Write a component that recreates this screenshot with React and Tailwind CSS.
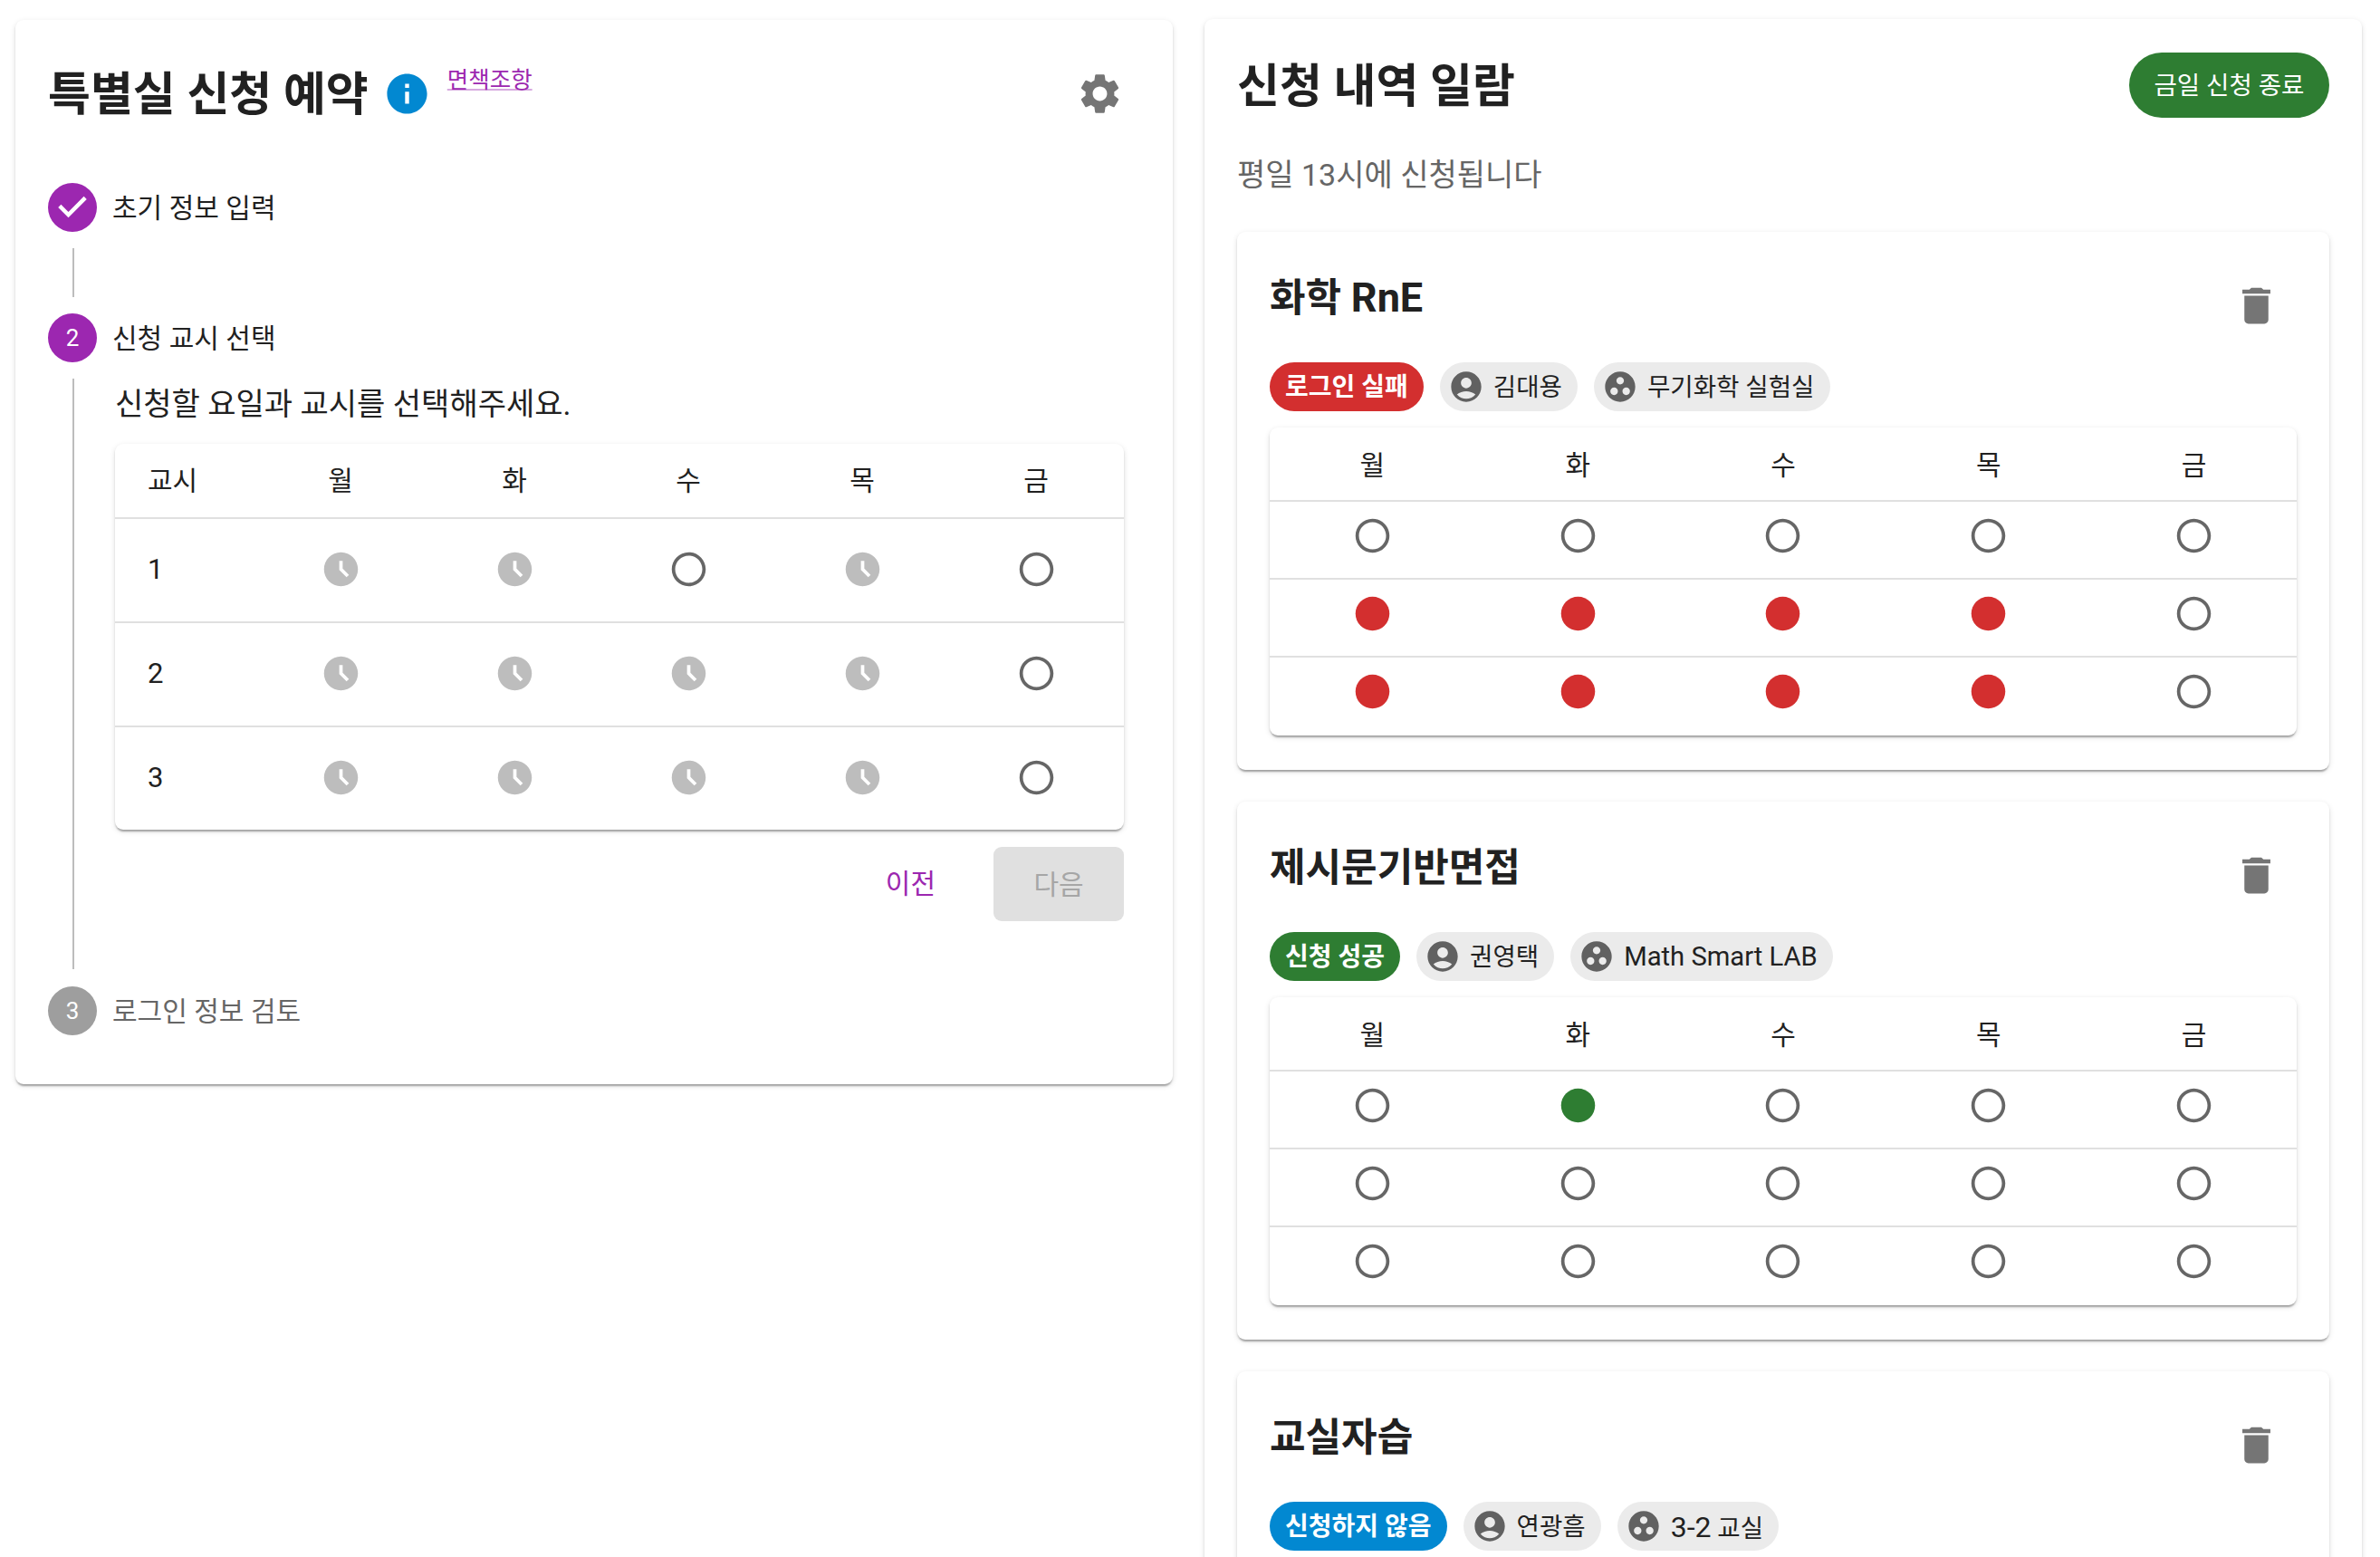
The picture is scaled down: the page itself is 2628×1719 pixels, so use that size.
import React from 'react';

const FONT = "font-['Roboto','Noto_Sans_CJK_KR',sans-serif]";
const DAYS = ['월', '화', '수', '목', '금'];

const ICONS = {
  info: 'M12 2C6.48 2 2 6.48 2 12s4.48 10 10 10 10-4.48 10-10S17.52 2 12 2zm1 15h-2v-6h2v6zm0-8h-2V7h2v2z',
  gear: 'M19.14 12.94c.04-.3.06-.61.06-.94 0-.32-.02-.64-.07-.94l2.03-1.58c.18-.14.23-.41.12-.61l-1.92-3.32c-.12-.22-.37-.29-.59-.22l-2.39.96c-.5-.38-1.03-.7-1.62-.94l-.36-2.54c-.04-.24-.24-.41-.48-.41h-3.84c-.24 0-.43.17-.47.41l-.36 2.54c-.59.24-1.13.57-1.62.94l-2.39-.96c-.22-.08-.47 0-.59.22L2.74 8.87c-.12.21-.08.47.12.61l2.03 1.58c-.05.3-.09.63-.09.94s.02.64.07.94l-2.03 1.58c-.18.14-.23.41-.12.61l1.92 3.32c.12.22.37.29.59.22l2.39-.96c.5.38 1.03.7 1.62.94l.36 2.54c.05.24.24.41.48.41h3.84c.24 0 .44-.17.47-.41l.36-2.54c.59-.24 1.13-.56 1.62-.94l2.39.96c.22.08.47 0 .59-.22l1.92-3.32c.12-.22.07-.47-.12-.61l-2.01-1.58zM12 15.6c-1.98 0-3.6-1.62-3.6-3.6s1.62-3.6 3.6-3.6 3.6 1.62 3.6 3.6-1.62 3.6-3.6 3.6z',
  trash: 'M6 19c0 1.1.9 2 2 2h8c1.1 0 2-.9 2-2V7H6v12zM19 4h-3.5l-1-1h-5l-1 1H5v2h14V4z',
  person: 'M12 2C6.48 2 2 6.48 2 12s4.48 10 10 10 10-4.48 10-10S17.52 2 12 2zm0 4c1.93 0 3.5 1.57 3.5 3.5S13.93 13 12 13s-3.5-1.57-3.5-3.5S10.07 6 12 6zm0 14c-2.03 0-4.43-.82-6.14-2.88C7.55 15.8 9.68 15 12 15s4.45.8 6.14 2.12C16.43 19.18 14.03 20 12 20z',
  room: 'M12 2C6.48 2 2 6.48 2 12s4.48 10 10 10 10-4.48 10-10S17.52 2 12 2zM8 17.5c-1.38 0-2.5-1.12-2.5-2.5s1.12-2.5 2.5-2.5 2.5 1.12 2.5 2.5-1.12 2.5-2.5 2.5zM9.5 8c0-1.38 1.12-2.5 2.5-2.5s2.5 1.12 2.5 2.5-1.12 2.5-2.5 2.5S9.5 9.38 9.5 8zm6.5 9.5c-1.38 0-2.5-1.12-2.5-2.5s1.12-2.5 2.5-2.5 2.5 1.12 2.5 2.5-1.12 2.5-2.5 2.5z',
  radio: 'M12 2C6.48 2 2 6.48 2 12s4.48 10 10 10 10-4.48 10-10S17.52 2 12 2zm0 18c-4.42 0-8-3.58-8-8s3.58-8 8-8 8 3.58 8 8-3.58 8-8 8z',
  clock: 'M11.99 2C6.47 2 2 6.48 2 12s4.47 10 9.99 10C17.52 22 22 17.52 22 12S17.52 2 11.99 2zm3.3 14.71L11 12.41V7h2v4.59l3.71 3.71-1.42 1.41z',
  dot: 'M12 2a10 10 0 1 0 0 20 10 10 0 0 0 0-20z',
  check: 'M12 0a12 12 0 1 0 0 24 12 12 0 0 0 0-24zm-2 17l-5-5 1.4-1.4 3.6 3.6 7.6-7.6L19 8l-9 9z',
};

const Icon = ({ name, className }) => (
  <svg viewBox="0 0 24 24" fill="currentColor" className={className}>
    <path d={ICONS[name]} />
  </svg>
);

const SlotIcon = ({ kind }) => {
  if (kind === 'c') return <Icon name="clock" className="w-[45px] h-[45px] text-[#bdbdbd]" />;
  if (kind === 'r') return <Icon name="dot" className="w-[45px] h-[45px] text-[#d32f2f]" />;
  if (kind === 'g') return <Icon name="dot" className="w-[45px] h-[45px] text-[#2e7d32]" />;
  return <Icon name="radio" className="w-[45px] h-[45px] text-[#666666]" />;
};

const SHADOW = 'shadow-[0_4px_2px_-2px_rgba(0,0,0,0.2),0_2px_2px_0_rgba(0,0,0,0.14),0_2px_6px_0_rgba(0,0,0,0.12)]';

const StepBadge = ({ children, gray }) => (
  <div className={`w-[54px] h-[54px] rounded-full flex items-center justify-center text-white text-[26px] leading-none ${gray ? 'bg-[#9e9e9e]' : 'bg-[#9c27b0]'}`}>
    {children}
  </div>
);

const PICK_ROWS = [
  ['1', 'c', 'c', 'o', 'c', 'o'],
  ['2', 'c', 'c', 'c', 'c', 'o'],
  ['3', 'c', 'c', 'c', 'c', 'o'],
];

const PickTable = () => (
  <div className={`rounded-[9px] bg-white ${SHADOW}`}>
    <div className="grid grid-cols-[153px_repeat(5,192px)] h-[83px] items-center border-b-2 border-[#e0e0e0] text-[30px] text-[#212121]">
      <div className="pl-[36px]">교시</div>
      {DAYS.map((d) => (
        <div key={d} className="text-center">{d}</div>
      ))}
    </div>
    {PICK_ROWS.map(([label, ...cells], i) => (
      <div
        key={label}
        className={`grid grid-cols-[153px_repeat(5,192px)] items-center text-[31px] text-[#212121] ${i < 2 ? 'h-[115px] border-b-2 border-[#e0e0e0]' : 'h-[113px]'}`}
      >
        <div className="pl-[36px]">{label}</div>
        {cells.map((k, j) => (
          <div key={j} className="flex justify-center pb-[2px]"><SlotIcon kind={k} /></div>
        ))}
      </div>
    ))}
  </div>
);

const StatusTable = ({ rows }) => (
  <div className={`rounded-[9px] bg-white ${SHADOW}`}>
    <div className="grid grid-cols-5 h-[82px] pt-[2px] items-center border-b-2 border-[#e0e0e0] text-[30px] text-[#212121]">
      {DAYS.map((d) => (
        <div key={d} className="text-center">{d}</div>
      ))}
    </div>
    {rows.map((cells, i) => (
      <div key={i} className={`grid grid-cols-5 h-[86px] items-center ${i < rows.length - 1 ? 'border-b-2 border-[#e0e0e0]' : ''}`}>
        {cells.map((k, j) => (
          <div key={j} className={`flex justify-center ${i < rows.length - 1 ? 'pb-[10px]' : 'pb-[12px]'}`}><SlotIcon kind={k} /></div>
        ))}
      </div>
    ))}
  </div>
);

const Chip = ({ icon, children }) => (
  <div className="h-[54px] rounded-full bg-[#ebebeb] flex items-center pl-[9px] pr-[17px] gap-[10px] text-[27.6px] text-[#212121]">
    <Icon name={icon} className="w-[40px] h-[40px] text-[#616161]" />
    <span className="pt-[2px]">{children}</span>
  </div>
);

const RequestCard = ({ title, status, statusClass, teacher, room, rows }) => (
  <div className={`rounded-[9px] bg-white px-[36px] pt-[35px] pb-[38px] ${SHADOW}`}>
    <div className="flex justify-between items-start h-[109px]">
      <h3 className="text-[43px] font-bold leading-[76px] text-[#212121]">{title}</h3>
      <Icon name="trash" className="w-[53px] h-[53px] mt-[20px] mr-[18px] text-[#757575]" />
    </div>
    <div className="flex gap-[18px] mb-[18px]">
      <div className={`h-[54px] pt-[2px] rounded-full px-[17px] flex items-center text-[28px] font-bold text-white ${statusClass}`}>{status}</div>
      <Chip icon="person">{teacher}</Chip>
      <Chip icon="room">{room}</Chip>
    </div>
    {rows && <StatusTable rows={rows} />}
  </div>
);

export default function App() {
  return (
    <div className={`h-[1719px] overflow-hidden bg-white flex items-start gap-[35px] pl-[17px] pt-[22px] ${FONT}`}>
      {/* left: booking stepper */}
      <section className={`w-[1278px] rounded-[9px] bg-white pl-[36px] pr-[54px] pt-[41px] pb-[54px] ${SHADOW}`}>
        <header className="flex items-center h-[80px]">
          <h1 className="text-[51px] pt-[3px] font-bold leading-none text-[#212121]">특별실 신청 예약</h1>
          <Icon name="info" className="w-[53px] h-[53px] ml-[16px] text-[#0288d1]" />
          <a href="#" className="self-start mt-[7px] ml-[18px] text-[25.5px] leading-[36px] text-[#9c27b0] underline decoration-[#9c27b0]/40 decoration-2">면책조항</a>
          <Icon name="gear" className="w-[53px] h-[53px] ml-auto text-[#757575]" />
        </header>

        <div className="mt-[59px] flex items-center gap-[17px] h-[54px] text-[30px] text-[#212121]">
          <Icon name="check" className="w-[54px] h-[54px] text-[#9c27b0]" />
          <span>초기 정보 입력</span>
        </div>
        <div className="ml-[27px] my-[18px] h-[54px] border-l-2 border-[#bdbdbd]" />
        <div className="flex items-center gap-[17px] h-[54px] text-[30px] text-[#212121]">
          <StepBadge>2</StepBadge>
          <span>신청 교시 선택</span>
        </div>
        <div className="ml-[27px] mt-[18px] h-[652px] border-l-2 border-[#bdbdbd] pl-[45px]">
          <p className="h-[57px] mb-[15px] flex items-center text-[34px] text-[#212121]">신청할 요일과 교시를 선택해주세요.</p>
          <PickTable />
          <div className="mt-[19px] flex items-center justify-end gap-[64px]">
            <button className="pb-[2px] text-[30px] text-[#9c27b0]">이전</button>
            <button className="w-[144px] h-[82px] rounded-[9px] bg-[#e0e0e0] text-[30px] text-[#a6a6a6]">다음</button>
          </div>
        </div>
        <div className="mt-[19px] flex items-center gap-[17px] h-[54px] text-[30px] text-[#666666]">
          <StepBadge gray>3</StepBadge>
          <span>로그인 정보 검토</span>
        </div>
      </section>

      {/* right: request list */}
      <section className={`w-[1278px] -mt-px rounded-[9px] bg-white px-[36px] pt-[33px] pb-[35px] ${SHADOW}`}>
        <header className="flex items-center justify-between h-[80px]">
          <h2 className="text-[51px] pt-[3px] font-bold leading-none text-[#212121]">신청 내역 일람</h2>
          <button className="w-[221px] h-[72px] pt-[2px] rounded-full bg-[#2e7d32] text-white text-[27.6px]">금일 신청 종료</button>
        </header>
        <p className="mt-[38px] h-[84px] text-[34px] leading-[42px] text-[#666666]">평일 13시에 신청됩니다</p>
        <div className="flex flex-col gap-[35px]">
          <RequestCard
            title={<>화학 <span className="text-[45px]">RnE</span></>}
            status="로그인 실패"
            statusClass="bg-[#d32f2f]"
            teacher="김대용"
            room="무기화학 실험실"
            rows={[
              ['o', 'o', 'o', 'o', 'o'],
              ['r', 'r', 'r', 'r', 'o'],
              ['r', 'r', 'r', 'r', 'o'],
            ]}
          />
          <RequestCard
            title="제시문기반면접"
            status="신청 성공"
            statusClass="bg-[#2e7d32]"
            teacher="권영택"
            room={<span className="text-[29.2px]">Math Smart LAB</span>}
            rows={[
              ['o', 'g', 'o', 'o', 'o'],
              ['o', 'o', 'o', 'o', 'o'],
              ['o', 'o', 'o', 'o', 'o'],
            ]}
          />
          <RequestCard
            title="교실자습"
            status="신청하지 않음"
            statusClass="bg-[#0288d1]"
            teacher="연광흠"
            room={<><span className="text-[32px]">3-2</span> 교실</>}
          />
        </div>
      </section>
    </div>
  );
}
